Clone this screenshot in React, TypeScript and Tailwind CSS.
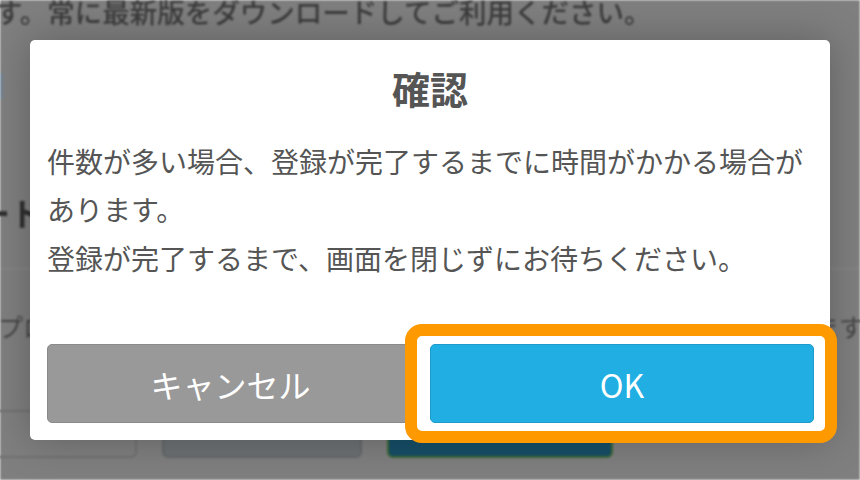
import React from 'react';

const jp = 'font-["Hiragino_Sans","Noto_Sans_CJK_JP",sans-serif]';

function BackdropPage() {
  // blurred page behind the modal, already darkened by the overlay
  return (
    <div className="flex h-full w-full flex-col bg-[#7f7f7f] blur-[1.3px]">
      <div className="-mt-[2px] -ml-[5px] whitespace-nowrap text-[27.5px] leading-[27px] font-medium text-[#3c3c3c]">
        す。常に最新版をダウンロードしてご利用ください。
      </div>
      <div className="mt-[48px] h-[26px] w-[3px] bg-[#6f8293]" />
      <div className="mt-[93px] -ml-[22px] text-[32px] leading-[40px] font-bold text-[#2e2e2e]">ート</div>
      <div className="mt-[36px] h-px w-full bg-[#8b8b8b]" />
      <div className="mt-[43px] flex justify-between text-[25px] leading-[28px] text-[#454545]">
        <span className="-ml-[2px]">プロ</span>
        <span className="-mr-[4px]">ます</span>
      </div>
      <div className="mt-[70px] flex gap-[25px]">
        <div className="-ml-[20px] h-[48px] w-[157px] rounded-[6px] border-2 border-[#717171]" />
        <div className="h-[48px] w-[200px] rounded-[6px] border-2 border-[#65696c] bg-[#6c7174]" />
        <div className="h-[48px] w-[226px] rounded-[6px] border-2 border-[#3d6a33] bg-[#164f68]" />
      </div>
    </div>
  );
}

export default function App() {
  return (
    <div className={`relative h-[480px] w-[860px] overflow-hidden ${jp}`}>
      <BackdropPage />

      <div className="absolute left-[30px] top-[40px] flex h-[400px] w-[800px] flex-col rounded-[5px] bg-white shadow-[0_0_40px_rgba(0,0,0,0.25)]">
        <h1 className="pt-[25px] text-center text-[38px] leading-[46px] font-bold text-[#555555]">確認</h1>
        <div className="mt-[26px] px-[17px] text-[28px] leading-[48px] text-[#555555]">
          <p>
            件数が多い場合、登録が完了するまでに時間がかかる場合が
            <br />
            あります。
          </p>
          <p className="mt-px">登録が完了するまで、画面を閉じずにお待ちください。</p>
        </div>
        <div className="mt-auto flex gap-[16px] pb-[17px] pl-[17px] pr-[16px]">
          <button className="h-[79px] w-[367px] rounded-[5px] border-[1.5px] border-[#8a8a8a] bg-[#999999] text-[32px] text-white">
            キャンセル
          </button>
          <button className="h-[79px] w-[384px] rounded-[5px] border-[1.5px] border-[#1f9bcb] bg-[#20aee3] text-[32px] text-white">
            OK
          </button>
        </div>
      </div>

      {/* highlight annotation around the OK button */}
      <div className="pointer-events-none absolute left-[405px] top-[324px] h-[119px] w-[432px] rounded-[17px] border-[12px] border-[#ff9900]" />
    </div>
  );
}
